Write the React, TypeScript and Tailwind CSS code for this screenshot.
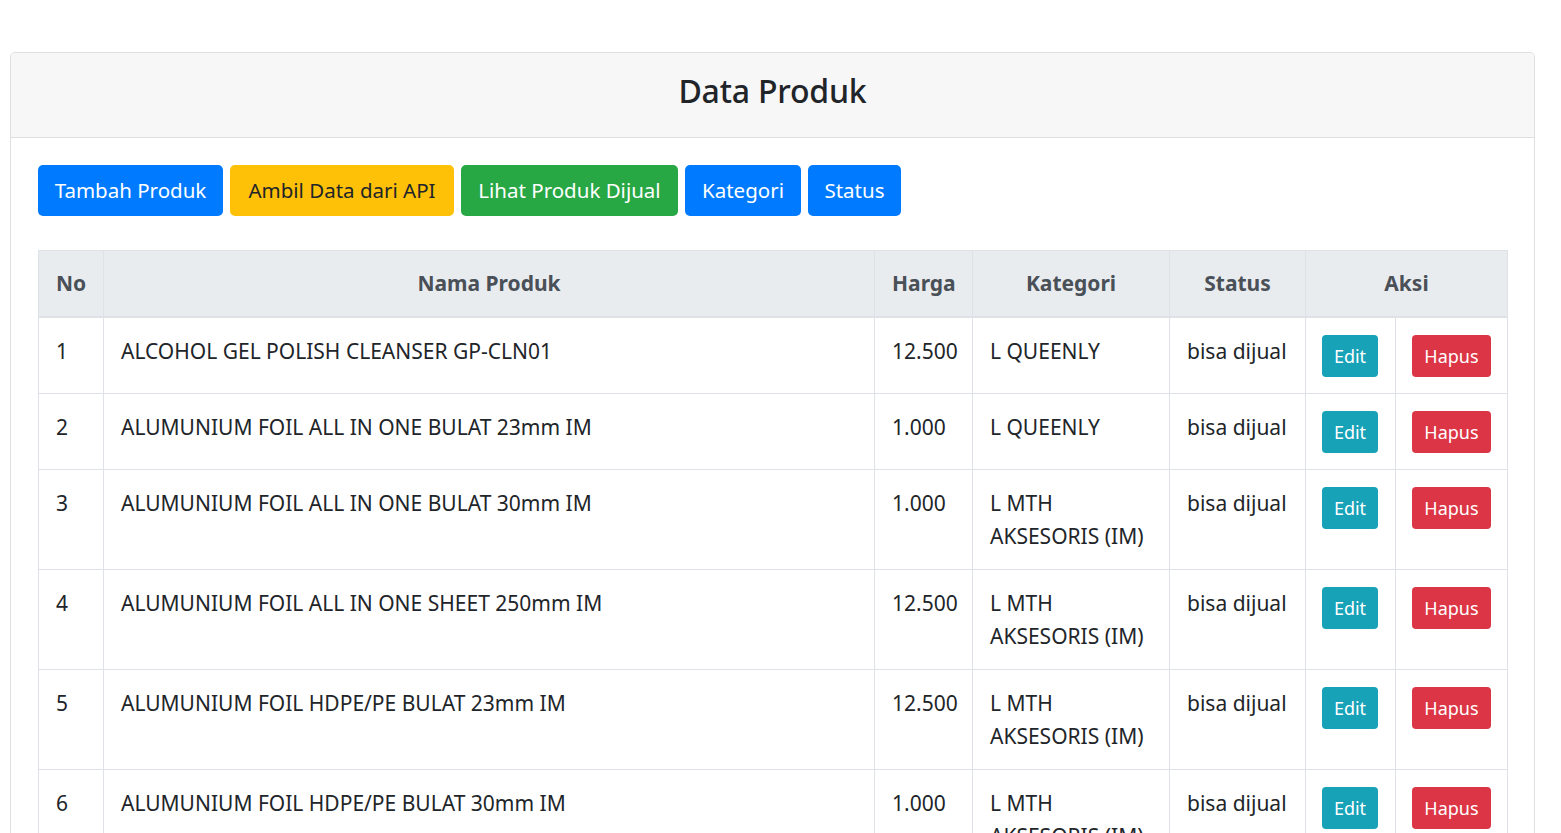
import React from 'react';

type Produk = {
  no: number;
  nama: string;
  harga: string;
  kategori: string[];
  status: string;
};

const produk: Produk[] = [
  { no: 1, nama: 'ALCOHOL GEL POLISH CLEANSER GP-CLN01', harga: '12.500', kategori: ['L QUEENLY'], status: 'bisa dijual' },
  { no: 2, nama: 'ALUMUNIUM FOIL ALL IN ONE BULAT 23mm IM', harga: '1.000', kategori: ['L QUEENLY'], status: 'bisa dijual' },
  { no: 3, nama: 'ALUMUNIUM FOIL ALL IN ONE BULAT 30mm IM', harga: '1.000', kategori: ['L MTH', 'AKSESORIS (IM)'], status: 'bisa dijual' },
  { no: 4, nama: 'ALUMUNIUM FOIL ALL IN ONE SHEET 250mm IM', harga: '12.500', kategori: ['L MTH', 'AKSESORIS (IM)'], status: 'bisa dijual' },
  { no: 5, nama: 'ALUMUNIUM FOIL HDPE/PE BULAT 23mm IM', harga: '12.500', kategori: ['L MTH', 'AKSESORIS (IM)'], status: 'bisa dijual' },
  { no: 6, nama: 'ALUMUNIUM FOIL HDPE/PE BULAT 30mm IM', harga: '1.000', kategori: ['L MTH', 'AKSESORIS (IM)'], status: 'bisa dijual' },
];

const toolbar = [
  { label: 'Tambah Produk', cls: 'w-[185px] bg-[#007bff] text-white' },
  { label: 'Ambil Data dari API', cls: 'w-[224px] bg-[#ffc107] text-[#212529]' },
  { label: 'Lihat Produk Dijual', cls: 'w-[217px] bg-[#28a745] text-white' },
  { label: 'Kategori', cls: 'w-[116px] bg-[#007bff] text-white' },
  { label: 'Status', cls: 'w-[93px] bg-[#007bff] text-white' },
];

export default function App() {
  return (
    <div className="min-h-screen bg-white pt-[52px] px-[10px] pr-[26px] text-[#212529] font-['Noto_Sans',sans-serif]">
      <div className="rounded-[5px] border border-[#dfdfdf] bg-white">
        {/* Header */}
        <div className="h-[85px] pb-[8px] flex items-center justify-center bg-[#f7f7f7] border-b border-[#dfdfdf] rounded-t-[5px]">
          <h3 className="text-[32px] font-medium leading-none tracking-[-0.2px]">Data Produk</h3>
        </div>

        {/* Body */}
        <div className="px-[27px] pt-[27px]">
          <div className="flex gap-[7px] mb-[34px]">
            {toolbar.map((b) => (
              <button
                key={b.label}
                className={`h-[51px] rounded-[5px] text-[20.5px] leading-none text-center ${b.cls}`}
              >
                {b.label}
              </button>
            ))}
          </div>

          <table className="w-[1469px] table-fixed border-collapse text-[21px] leading-[33px]">
            <colgroup>
              <col className="w-[65px]" />
              <col className="w-[771px]" />
              <col className="w-[98px]" />
              <col className="w-[197px]" />
              <col className="w-[136px]" />
              <col className="w-[90px]" />
              <col className="w-[112px]" />
            </colgroup>
            <thead>
              <tr className="bg-[#e9ecef] text-[#495057]">
                <th className="border border-[#dee2e6] border-b-2 px-[17px] py-[16px] font-bold text-left">No</th>
                <th className="border border-[#dee2e6] border-b-2 px-[17px] py-[16px] font-bold">Nama Produk</th>
                <th className="border border-[#dee2e6] border-b-2 px-[17px] py-[16px] font-bold">Harga</th>
                <th className="border border-[#dee2e6] border-b-2 px-[17px] py-[16px] font-bold">Kategori</th>
                <th className="border border-[#dee2e6] border-b-2 px-[17px] py-[16px] font-bold">Status</th>
                <th colSpan={2} className="border border-[#dee2e6] border-b-2 px-[17px] py-[16px] font-bold">Aksi</th>
              </tr>
            </thead>
            <tbody>
              {produk.map((p) => (
                <tr key={p.no}>
                  <td className="border border-[#dee2e6] px-[17px] pt-[17px] pb-[16px] align-top">{p.no}</td>
                  <td className="border border-[#dee2e6] px-[17px] pt-[17px] pb-[16px] align-top">{p.nama}</td>
                  <td className="border border-[#dee2e6] px-[17px] pt-[17px] pb-[16px] align-top">{p.harga}</td>
                  <td className="border border-[#dee2e6] px-[17px] pt-[17px] pb-[16px] align-top">
                    {p.kategori.map((k) => (
                      <div key={k}>{k}</div>
                    ))}
                  </td>
                  <td className="border border-[#dee2e6] px-[17px] pt-[17px] pb-[16px] align-top">{p.status}</td>
                  <td className="border border-[#dee2e6] px-[16px] pt-[17px] pb-[16px] align-top">
                    <button className="h-[42px] w-[56px] rounded-[4px] bg-[#17a2b8] text-white text-[18px] leading-none">Edit</button>
                  </td>
                  <td className="border border-[#dee2e6] px-[16px] pt-[17px] pb-[16px] align-top">
                    <button className="h-[42px] w-[79px] rounded-[4px] bg-[#dc3545] text-white text-[18px] leading-none">Hapus</button>
                  </td>
                </tr>
              ))}
            </tbody>
          </table>
        </div>
      </div>
    </div>
  );
}
